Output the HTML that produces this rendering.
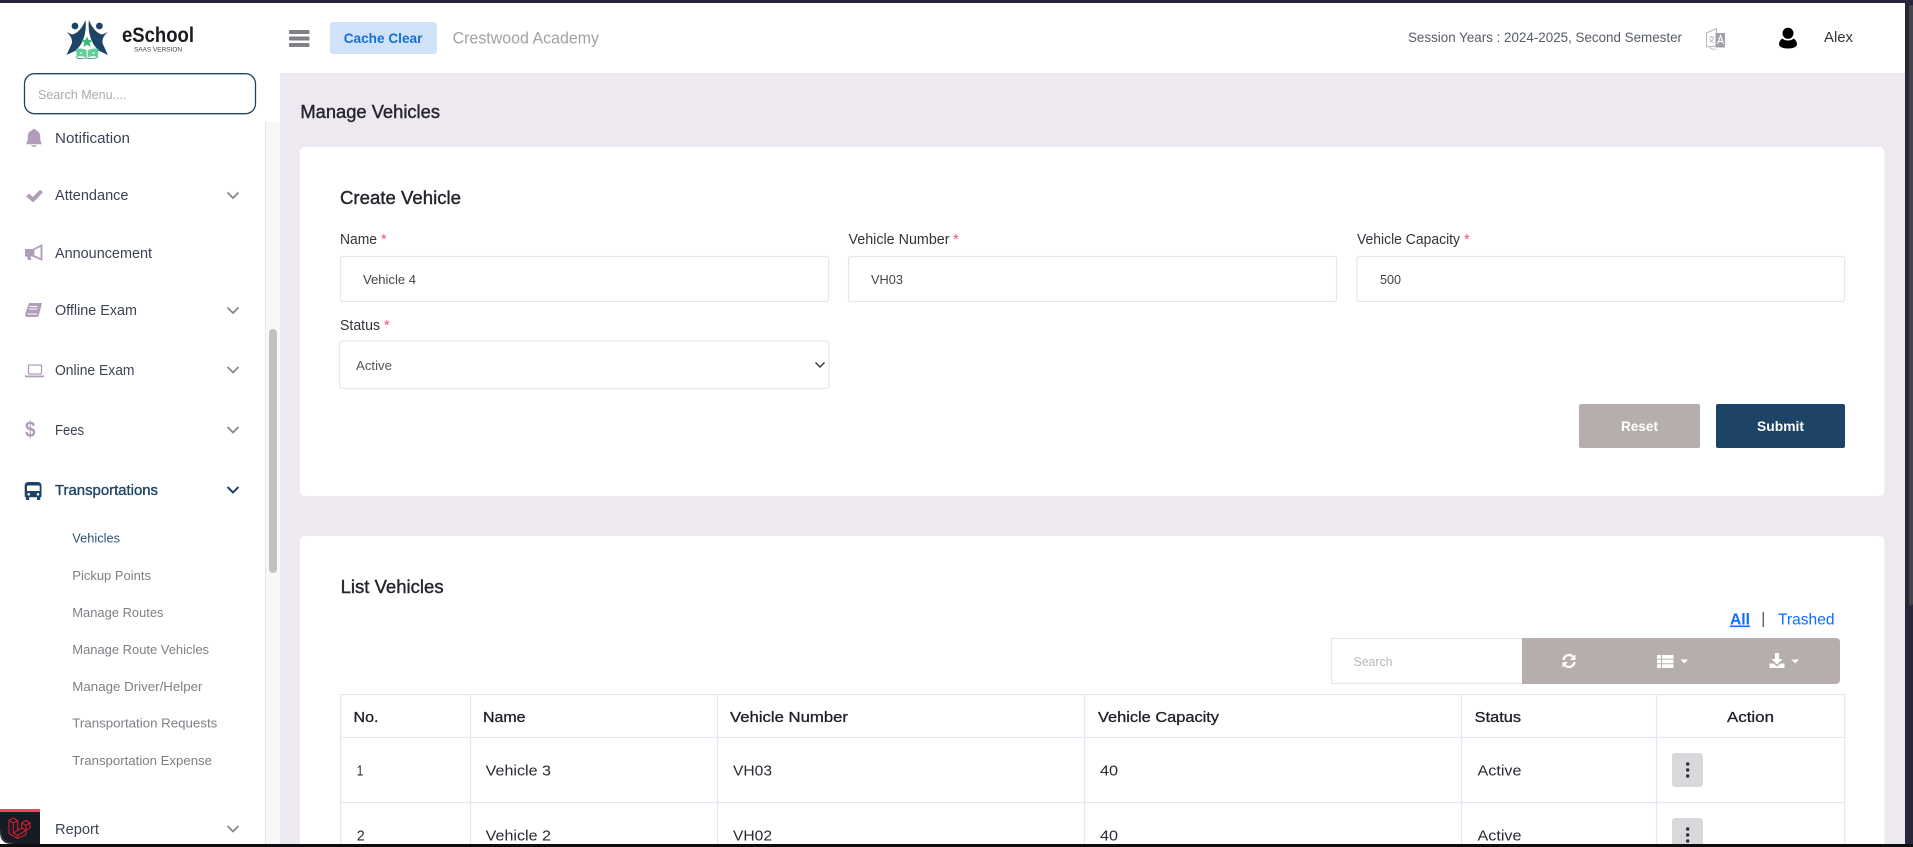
<!DOCTYPE html>
<html lang="en">
<head>
<meta charset="utf-8">
<title>Manage Vehicles</title>
<style>
html,body{margin:0;padding:0;width:1913px;height:847px;overflow:hidden;background:#fff}
svg{display:block}
text{font-family:"Liberation Sans",Arial,sans-serif;white-space:pre}
.side{font-size:14.5px;fill:#3c4454}
.sub{font-size:13px;fill:#7d7f85}
.h{font-size:18px;fill:#25252e;stroke:#25252e;stroke-width:.4px}
.lab{font-size:14.5px;fill:#33333c}
.req{font-size:14.5px;fill:#f0527a}
.val{font-size:13px;fill:#44444c}
.th{font-size:15px;fill:#1f1f28;stroke:#1f1f28;stroke-width:.3px}
.td{font-size:15px;fill:#2a2a32}
.btn{font-size:14px;font-weight:700;fill:#fff}
.box{fill:#fff;stroke:#e4e6ef;stroke-width:1.2}
.chev{fill:none;stroke:#85858b;stroke-width:1.7}
.ic{fill:#b19cb9}
.ln{stroke:#e5e6ef;stroke-width:1.2}
</style>
</head>
<body>
<svg xmlns="http://www.w3.org/2000/svg" width="1913" height="847" viewBox="0 0 1913 847">
  <!-- page -->
  <rect width="1913" height="847" fill="#fff"/>
  <rect x="280" y="73" width="1625" height="774" fill="#eee8f0"/>

  <!-- sidebar track -->
  <rect x="265" y="122" width="15" height="725" fill="#f8f8f8"/>
  <rect x="265" y="122" width="1" height="725" fill="#e6e6e6"/>
  <rect x="269" y="329" width="8" height="244" rx="4" fill="#c1c1c1"/>

  <!-- logo -->
  <g>
    <circle cx="75" cy="26" r="3.4" fill="#1d4466"/>
    <circle cx="99.4" cy="26" r="3.4" fill="#1d4466"/>
    <path d="M66.7 32L72 34.500Q80 33 85.500 20Q87 34 80.500 45L76 50.500L66.500 55L72 43Q72.500 37 66.700 32Z" fill="#1d4466"/>
    <path d="M107.700 32L102.400 34.500Q94.400 33 88.900 20Q87.400 34 93.900 45L98.400 50.500L107.900 55L102.400 43Q101.900 37 107.700 32Z" fill="#1d4466"/>
    <path d="M87 36.200l1.600 3.800 4.100.3-3.100 2.600 1 4-3.600-2.100-3.600 2.100 1-4-3.100-2.600 4.100-.3z" fill="#3cb878"/>
    <path d="M76 49c4-1 8.300-.5 10.700 1.500V57.500c-3-1.500-7.500-1.500-10-.5z" fill="#62cf98"/>
    <path d="M98.500 49c-4-1-8.300-.5-10.700 1.500V57.500c3-1.500 7.500-1.500 10-.5z" fill="#62cf98"/>
    <circle cx="81" cy="53" r="1" fill="#e8f8ef"/><circle cx="93.500" cy="53" r="1" fill="#e8f8ef"/>
    <path d="M76 56.500q1 2.500 5 2t6.200-.5q2.500 1 6 .5t4.800-2" fill="none" stroke="#2f8f75" stroke-width=".8"/>
  </g>
  <text x="122" y="42" font-size="21" font-weight="700" fill="#1b1b20" textLength="72" lengthAdjust="spacingAndGlyphs">eSchool</text>
  <text x="134" y="51.500" font-size="6" fill="#444" textLength="48" lengthAdjust="spacingAndGlyphs">SAAS VERSION</text>

  <!-- header -->
  <g fill="#7f7f86">
    <rect x="289" y="30" width="20.500" height="4" rx="1"/>
    <rect x="289" y="36.500" width="20.500" height="4" rx="1"/>
    <rect x="289" y="43" width="20.500" height="4" rx="1"/>
  </g>
  <rect x="330" y="22" width="107" height="32" rx="3" fill="#cfe2f8"/>
  <text x="343.700" y="43" font-size="14" font-weight="700" fill="#1470d8" textLength="78.700" lengthAdjust="spacingAndGlyphs">Cache Clear</text>
  <text x="452.600" y="43.500" font-size="16.500" fill="#a2a2a6" textLength="146.400" lengthAdjust="spacingAndGlyphs">Crestwood Academy</text>
  <text x="1408" y="42" font-size="14" fill="#565c68" textLength="274" lengthAdjust="spacingAndGlyphs">Session Years : 2024-2025, Second Semester</text>
  <!-- language icon -->
  <g>
    <path d="M1706.500 33l10-4.500V46l-10 1z" fill="#fff" stroke="#b5b5bd" stroke-width="1"/>
    <path d="M1715.500 33h9.500v14.500h-9.500z" fill="#a0a1ab"/>
    <path d="M1717.500 44l3-8.500 3 8.500M1718.500 41.500h4" fill="none" stroke="#fff" stroke-width="1.100"/>
    <path d="M1709 37h5M1711.500 36v1.500M1713.500 37.500c-.5 2.500-2 4-3.500 5M1710 39c.7 1.500 2 3 3.500 3.500" fill="none" stroke="#aeaeb6" stroke-width=".8"/>
    <path d="M1709.500 47.500q3.500 2.500 7 1.500" fill="none" stroke="#b9bac2" stroke-width=".8"/>
  </g>
  <!-- user -->
  <circle cx="1788" cy="33.300" r="5.500" fill="#000"/>
  <path d="M1782.500 38.500c1.500 1.500 3.500 2 5.500 2s4-.5 5.500-2c2 1 3.500 3.500 3.500 5.500 0 3-4 4.500-9 4.500s-9-1.500-9-4.500c0-2 1.500-4.500 3.500-5.500z" fill="#000"/>
  <text x="1824" y="42" font-size="14.500" fill="#33333a" textLength="29" lengthAdjust="spacingAndGlyphs">Alex</text>

  <!-- sidebar search -->
  <rect x="24.500" y="73.700" width="231" height="40" rx="10" fill="#fff" stroke="#1d4466" stroke-width="1.300"/>
  <text x="38" y="99" font-size="12.500" fill="#ababab" textLength="88.500" lengthAdjust="spacingAndGlyphs">Search Menu....</text>

  <!-- sidebar items -->
  <path class="ic" d="M34 128.700c-1 0-1.700.7-1.700 1.600-3.300.9-4.500 3.500-4.500 6.700 0 4-.9 5.700-1.900 7.200h16.200c-1-1.500-1.900-3.200-1.900-7.200 0-3.200-1.200-5.800-4.500-6.700 0-.9-.7-1.600-1.700-1.600zM31 145.200c.3 1 1.500 1.600 3 1.600s2.700-.6 3-1.600z"/>
  <text class="side" x="55" y="143" textLength="75" lengthAdjust="spacingAndGlyphs">Notification</text>

  <polyline points="27.500,195 33,199.800 41.500,191" fill="none" stroke="#b19cb9" stroke-width="4"/>
  <text class="side" x="55" y="200" textLength="73.500" lengthAdjust="spacingAndGlyphs">Attendance</text>
  <polyline class="chev" points="227.500,192.500 233,198 238.500,192.500"/>

  <path class="ic" d="M25 249h8v7.500h-2.500l1 3.500h-3.500l-1-3.500H25z"/>
  <path d="M33.500 249.500l8-4v14l-8-3.500z" fill="none" stroke="#b19cb9" stroke-width="1.800"/>
  <text class="side" x="55" y="258" textLength="97" lengthAdjust="spacingAndGlyphs">Announcement</text>

  <path class="ic" d="M29 303h13l-3.200 12.300c-.2 1-1 1.700-2 1.700H27.500c-1.800 0-2.700-1.300-2.300-3z"/>
  <path d="M29.500 306.500h8M29 309h8M27.300 314h10" stroke="#fff" stroke-width="1" fill="none"/>
  <text class="side" x="55" y="315" textLength="82" lengthAdjust="spacingAndGlyphs">Offline Exam</text>
  <polyline class="chev" points="227.500,307.500 233,313 238.500,307.500"/>

  <rect x="28.500" y="365" width="13" height="9" rx="1" fill="none" stroke="#b19cb9" stroke-width="1.300"/>
  <rect x="25" y="375.500" width="19" height="1.800" fill="#b19cb9"/>
  <text class="side" x="55" y="375" textLength="79.500" lengthAdjust="spacingAndGlyphs">Online Exam</text>
  <polyline class="chev" points="227.500,367 233,372.500 238.500,367"/>

  <text x="25" y="437" font-size="22" font-weight="700" fill="#b19cb9" textLength="10.500" lengthAdjust="spacingAndGlyphs">$</text>
  <text class="side" x="55" y="435" textLength="29" lengthAdjust="spacingAndGlyphs">Fees</text>
  <polyline class="chev" points="227.500,427 233,432.500 238.500,427"/>

  <!-- bus -->
  <path d="M29 482h8.700c2.200 0 3.800 1.500 3.800 3.500V496c0 .8-.5 1.200-1.200 1.200v2c0 .5-.4.800-.9.800h-1.500c-.5 0-.9-.3-.9-.8v-2h-7.800v2c0 .5-.4.800-.9.800h-1.500c-.5 0-.9-.3-.9-.8v-2c-.7 0-1.200-.4-1.200-1.200V485.500c0-2 1.600-3.500 3.800-3.500z" fill="#1d4466"/>
  <path d="M28 485.500h10.700c.6 0 1 .4 1 1v4.500H27v-4.500c0-.6.400-1 1-1z" fill="#fff"/>
  <circle cx="28.700" cy="494.300" r="1.300" fill="#fff"/><circle cx="38" cy="494.300" r="1.300" fill="#fff"/>
  <text x="55" y="495" font-size="14.500" fill="#1d4466" stroke="#1d4466" stroke-width=".35" textLength="103" lengthAdjust="spacingAndGlyphs">Transportations</text>
  <polyline points="227.500,487 233,492.500 238.500,487" fill="none" stroke="#1d4466" stroke-width="2"/>

  <text class="sub" style="fill:#2c5378" x="72.300" y="542.500" textLength="47.700" lengthAdjust="spacingAndGlyphs">Vehicles</text>
  <text class="sub" x="72.300" y="580" textLength="78.700" lengthAdjust="spacingAndGlyphs">Pickup Points</text>
  <text class="sub" x="72.300" y="617" textLength="91.200" lengthAdjust="spacingAndGlyphs">Manage Routes</text>
  <text class="sub" x="72.300" y="654" textLength="136.700" lengthAdjust="spacingAndGlyphs">Manage Route Vehicles</text>
  <text class="sub" x="72.300" y="691" textLength="130.200" lengthAdjust="spacingAndGlyphs">Manage Driver/Helper</text>
  <text class="sub" x="72.300" y="727.500" textLength="145" lengthAdjust="spacingAndGlyphs">Transportation Requests</text>
  <text class="sub" x="72.300" y="765" textLength="139.700" lengthAdjust="spacingAndGlyphs">Transportation Expense</text>

  <text class="side" x="55" y="834" textLength="44" lengthAdjust="spacingAndGlyphs">Report</text>
  <polyline class="chev" points="227.500,826 233,831.500 238.500,826"/>

  <!-- title -->
  <text class="h" x="300.400" y="118" textLength="139.600" lengthAdjust="spacingAndGlyphs">Manage Vehicles</text>

  <!-- card 1 -->
  <rect x="300" y="147" width="1584.500" height="349" rx="5" fill="#fff"/>
  <text class="h" x="340" y="204" textLength="121" lengthAdjust="spacingAndGlyphs">Create Vehicle</text>

  <text class="lab" x="340" y="244" textLength="37" lengthAdjust="spacingAndGlyphs">Name</text>
  <text class="req" x="381" y="244">*</text>
  <rect class="box" x="340.500" y="256.500" width="488" height="45" rx="2"/>
  <text class="val" x="363" y="284" textLength="53" lengthAdjust="spacingAndGlyphs">Vehicle 4</text>

  <text class="lab" x="848.500" y="244" textLength="101" lengthAdjust="spacingAndGlyphs">Vehicle Number</text>
  <text class="req" x="953" y="244">*</text>
  <rect class="box" x="848.500" y="256.500" width="488" height="45" rx="2"/>
  <text class="val" x="871" y="284" textLength="32" lengthAdjust="spacingAndGlyphs">VH03</text>

  <text class="lab" x="1357" y="244" textLength="103" lengthAdjust="spacingAndGlyphs">Vehicle Capacity</text>
  <text class="req" x="1464" y="244">*</text>
  <rect class="box" x="1357" y="256.500" width="487.500" height="45" rx="2"/>
  <text class="val" x="1380" y="284" textLength="21" lengthAdjust="spacingAndGlyphs">500</text>

  <text class="lab" x="340" y="330" textLength="40" lengthAdjust="spacingAndGlyphs">Status</text>
  <text class="req" x="384" y="330">*</text>
  <rect class="box" x="339.500" y="341" width="489.500" height="47.500" rx="3"/>
  <text class="val" x="356" y="370" style="fill:#55555c" textLength="36" lengthAdjust="spacingAndGlyphs">Active</text>
  <polyline points="815.500,362.500 820,367 824.500,362.500" fill="none" stroke="#333" stroke-width="1.400"/>

  <rect x="1579" y="404" width="121" height="44" rx="2" fill="#b5aeac"/>
  <text class="btn" x="1621" y="431" textLength="37" lengthAdjust="spacingAndGlyphs">Reset</text>
  <rect x="1716" y="404" width="129" height="44" rx="2" fill="#1d4466"/>
  <text class="btn" x="1757" y="431" textLength="47" lengthAdjust="spacingAndGlyphs">Submit</text>

  <!-- card 2 -->
  <rect x="300" y="536" width="1584.500" height="320" rx="5" fill="#fff"/>
  <text class="h" x="340.600" y="593" textLength="103" lengthAdjust="spacingAndGlyphs">List Vehicles</text>

  <text x="1730" y="624.500" font-size="16" font-weight="700" fill="#0d6efd" text-decoration="underline" textLength="20" lengthAdjust="spacingAndGlyphs">All</text>
  <rect x="1762.700" y="612" width="1" height="15" fill="#222"/>
  <text x="1778" y="624.500" font-size="16" fill="#0d6efd" textLength="56.500" lengthAdjust="spacingAndGlyphs">Trashed</text>

  <!-- toolbar -->
  <rect class="box" x="1331.500" y="638.500" width="191" height="45"/>
  <text x="1353.500" y="666" font-size="13" fill="#b8b8b8" textLength="39" lengthAdjust="spacingAndGlyphs">Search</text>
  <path d="M1522 638h314a4 4 0 0 1 4 4v38a4 4 0 0 1-4 4h-314z" fill="#b5aeac"/>
  <path d="M1563.500 660c.4-3 2.800-5 5.600-5 1.800 0 3.200.7 4.200 1.900" fill="none" stroke="#fff" stroke-width="2.200"/>
  <path d="M1575.500 654.500v5.500h-5.500z" fill="#fff"/>
  <path d="M1574.500 662c-.4 3-2.800 5-5.600 5-1.800 0-3.200-.7-4.200-1.900" fill="none" stroke="#fff" stroke-width="2.200"/>
  <path d="M1562.500 667.500V662h5.500z" fill="#fff"/>
  <g fill="#fff">
    <rect x="1657" y="655" width="4" height="3.700"/><rect x="1662" y="655" width="11.500" height="3.700"/>
    <rect x="1657" y="659.600" width="4" height="3.700"/><rect x="1662" y="659.600" width="11.500" height="3.700"/>
    <rect x="1657" y="664.200" width="4" height="3.700"/><rect x="1662" y="664.200" width="11.500" height="3.700"/>
    <path d="M1680.500 659.500h7.500l-3.750 4z"/>
    <path d="M1775 653h4v6h3.500l-5.500 5.500-5.500-5.500h3.500z"/>
    <path d="M1769.500 663.500h4l3.500 3 3.500-3h4v4.500h-15z"/>
    <path d="M1791.500 659.500h7.500l-3.750 4z"/>
  </g>

  <!-- table -->
  <rect x="340.600" y="694.500" width="1504" height="160" fill="#fff" stroke="#e5e6ef" stroke-width="1.200"/>
  <line class="ln" x1="340" y1="737.500" x2="1845" y2="737.500"/>
  <line class="ln" x1="340" y1="802.500" x2="1845" y2="802.500"/>
  <line class="ln" x1="470.500" y1="694" x2="470.500" y2="847"/>
  <line class="ln" x1="717.500" y1="694" x2="717.500" y2="847"/>
  <line class="ln" x1="1084.500" y1="694" x2="1084.500" y2="847"/>
  <line class="ln" x1="1461.500" y1="694" x2="1461.500" y2="847"/>
  <line class="ln" x1="1656.500" y1="694" x2="1656.500" y2="847"/>

  <text class="th" x="353.500" y="722" textLength="25" lengthAdjust="spacingAndGlyphs">No.</text>
  <text class="th" x="483" y="722" textLength="42.500" lengthAdjust="spacingAndGlyphs">Name</text>
  <text class="th" x="730" y="722" textLength="118" lengthAdjust="spacingAndGlyphs">Vehicle Number</text>
  <text class="th" x="1098" y="722" textLength="121" lengthAdjust="spacingAndGlyphs">Vehicle Capacity</text>
  <text class="th" x="1474.700" y="722" textLength="46.300" lengthAdjust="spacingAndGlyphs">Status</text>
  <text class="th" x="1727" y="722" textLength="47" lengthAdjust="spacingAndGlyphs">Action</text>

  <text class="td" x="356.700" y="775.500" textLength="6.500" lengthAdjust="spacingAndGlyphs">1</text>
  <text class="td" x="485.700" y="775.500" textLength="65.300" lengthAdjust="spacingAndGlyphs">Vehicle 3</text>
  <text class="td" x="733" y="775.500" textLength="39" lengthAdjust="spacingAndGlyphs">VH03</text>
  <text class="td" x="1100" y="775.500" textLength="18" lengthAdjust="spacingAndGlyphs">40</text>
  <text class="td" x="1477.500" y="775.500" textLength="44" lengthAdjust="spacingAndGlyphs">Active</text>
  <rect x="1672" y="753" width="31" height="34" rx="3" fill="#d8d9dd"/>
  <g fill="#2d2d38"><circle cx="1687.700" cy="764" r="1.700"/><circle cx="1687.700" cy="770" r="1.700"/><circle cx="1687.700" cy="776" r="1.700"/></g>

  <text class="td" x="356.700" y="840.500" textLength="8" lengthAdjust="spacingAndGlyphs">2</text>
  <text class="td" x="485.700" y="840.500" textLength="65.300" lengthAdjust="spacingAndGlyphs">Vehicle 2</text>
  <text class="td" x="733" y="840.500" textLength="39" lengthAdjust="spacingAndGlyphs">VH02</text>
  <text class="td" x="1100" y="840.500" textLength="18" lengthAdjust="spacingAndGlyphs">40</text>
  <text class="td" x="1477.500" y="840.500" textLength="44" lengthAdjust="spacingAndGlyphs">Active</text>
  <rect x="1672" y="818" width="31" height="34" rx="3" fill="#d8d9dd"/>
  <g fill="#2d2d38"><circle cx="1687.700" cy="829" r="1.700"/><circle cx="1687.700" cy="835" r="1.700"/><circle cx="1687.700" cy="841" r="1.700"/></g>

  <!-- debugbar -->
  <path d="M0 809h40v35H12Q0 844 0 832z" fill="#171c24"/>
  <path d="M0 830Q1 842.500 13 843.500" fill="none" stroke="#3c4048" stroke-width="1"/>
  <rect x="0" y="809" width="40" height="3" fill="#f0445a"/>
  <g fill="none" stroke="#c8202f" stroke-width="1.100" stroke-linejoin="round">
    <path d="M9 820.500L13.300 818L17.600 820.500V830.500L21.700 828V823L25.900 820.500L30 823V828L25.900 830.400V834.800L17.500 838.500L9 833.500Z"/>
    <path d="M9 820.500L13.300 823L17.600 820.500M13.300 823V833L17.500 835.600V838.500M13.300 833L17.600 830.500M17.500 835.600L25.900 830.400M21.700 823L25.900 825.400L30 823M25.900 825.400V830.400M21.700 828L25.900 830.400"/>
  </g>

  <!-- window chrome -->
  <rect x="0" y="0" width="1913" height="3" fill="#2a2538"/>
  <rect x="1905" y="0" width="8" height="847" fill="#2a2538"/>
  <rect x="1909" y="5" width="4" height="600" rx="1.500" fill="#45454d"/>
  <rect x="0" y="844" width="1913" height="3" fill="#0e0e10"/>
</svg>
</body>
</html>
